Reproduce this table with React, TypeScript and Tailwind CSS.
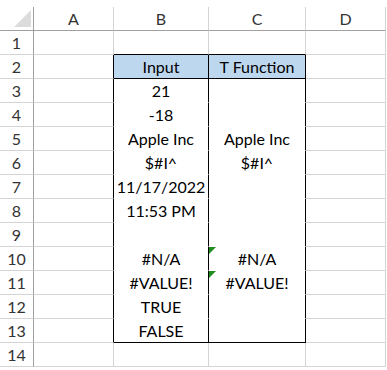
import React from "react";

const cols = ["A", "B", "C", "D"];

const inputs: Record<number, string> = {
  2: "Input",
  3: "21",
  4: "-18",
  5: "Apple Inc",
  6: "$#I^",
  7: "11/17/2022",
  8: "11:53 PM",
  10: "#N/A",
  11: "#VALUE!",
  12: "TRUE",
  13: "FALSE",
};

const tResults: Record<number, string> = {
  2: "T Function",
  5: "Apple Inc",
  6: "$#I^",
  10: "#N/A",
  11: "#VALUE!",
};

const rows = Array.from({ length: 14 }, (_, i) => i + 1);

const inTable = (r: number) => r >= 2 && r <= 13;

const bottomEdge = (r: number) =>
  r === 1 || r === 2 || r === 13
    ? "border-b border-b-black "
    : inTable(r)
    ? "border-b border-b-white "
    : "border-b border-b-[#d4d4d4] ";

const App = () => {
  return (
    <div
      className="w-[387px] h-[370px] bg-white overflow-hidden pt-[7px] text-black"
      style={{ fontFamily: "Lato, 'Open Sans', sans-serif" }}
    >
      <div className="grid grid-cols-[34px_80px_95px_97px_80px] auto-rows-[24px]">
        {/* Column headers */}
        <div className="border-r border-b border-[#a0a0a0] flex items-end justify-end pr-[2px] pb-[3px]">
          <div className="w-0 h-0 border-l-[17px] border-l-transparent border-b-[17px] border-b-[#dcdcdc]" />
        </div>
        {cols.map((c) => (
          <div
            key={c}
            className="border-r border-[#d4d4d4] border-b border-b-[#a0a0a0] flex items-center justify-center text-[16px] text-[#333]"
          >
            {c}
          </div>
        ))}

        {rows.map((r) => (
          <React.Fragment key={r}>
            {/* Row number */}
            <div className="border-r border-r-[#a0a0a0] border-b border-b-[#d4d4d4] flex items-center justify-center text-[16px] text-[#333]">
              {r}
            </div>

            {/* A */}
            <div
              className={
                "border-b border-b-[#d4d4d4] border-r " +
                (inTable(r) ? "border-r-black" : "border-r-[#d4d4d4]")
              }
            />

            {/* B */}
            <div
              className={
                "border-r flex items-center justify-center text-[16px] " +
                (inTable(r) ? "border-r-black " : "border-r-[#d4d4d4] ") +
                bottomEdge(r) +
                (r === 2 ? "bg-[#bdd7ee]" : "")
              }
            >
              {inputs[r]}
            </div>

            {/* C */}
            <div
              className={
                "relative border-r flex items-center justify-center text-[16px] " +
                (inTable(r) ? "border-r-black " : "border-r-[#d4d4d4] ") +
                bottomEdge(r) +
                (r === 2 ? "bg-[#bdd7ee]" : "")
              }
            >
              {(r === 10 || r === 11) && (
                <div className="absolute top-0 left-0 w-0 h-0 border-t-[7px] border-t-[#1e8c1e] border-r-[7px] border-r-transparent" />
              )}
              {tResults[r]}
            </div>

            {/* D */}
            <div className="border-r border-b border-[#d4d4d4]" />
          </React.Fragment>
        ))}
      </div>
    </div>
  );
};

export default App;
